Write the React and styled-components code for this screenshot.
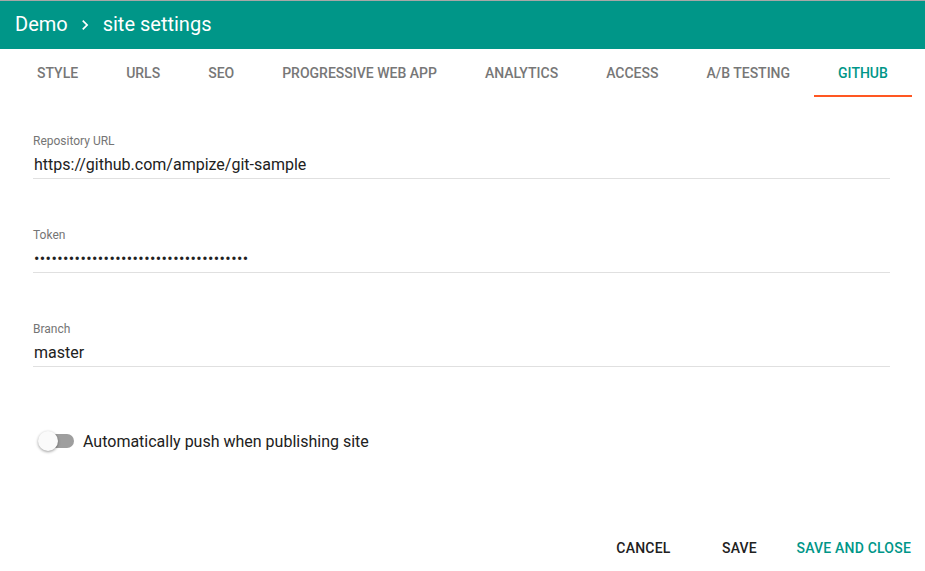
import React, { useState } from "react";
import styled, { createGlobalStyle } from "styled-components";

const GlobalStyle = createGlobalStyle`
  body {
    margin: 0;
    background: #ffffff;
    font-family: Roboto, "Noto Sans", Arial, sans-serif;
  }
`;

const Page = styled.div`
  width: 925px;
  height: 571px;
  display: flex;
  flex-direction: column;
  background: #fff;
  overflow: hidden;
`;

const AppBar = styled.header`
  box-sizing: border-box;
  height: 49px;
  border-top: 1px solid #a7a7a7;
  background: #009688;
  display: flex;
  align-items: center;
  padding: 0 0 2px 15px;
  color: #fff;
  font-size: 20px;
`;

const Crumb = styled.span`
  line-height: 24px;
`;

const Chevron = styled.svg`
  width: 20px;
  height: 20px;
  margin: 2px 8px 0 7px;
`;

const TabBar = styled.nav`
  display: flex;
  padding-left: 13px;
  height: 48px;
`;

const Tab = styled.div`
  position: relative;
  padding: 0 24px;
  display: flex;
  align-items: center;
  font-size: 14px;
  font-weight: 500;
  color: ${({ $active }) => ($active ? "#009688" : "#777777")};
  text-transform: uppercase;
  cursor: pointer;

  &::after {
    content: "";
    display: ${({ $active }) => ($active ? "block" : "none")};
    position: absolute;
    left: 0;
    right: 0;
    bottom: 0;
    height: 2px;
    background: #ff5722;
  }
`;

const Form = styled.section`
  padding: 37px 35px 0 33px;
  display: flex;
  flex-direction: column;
  gap: 49px;
`;

const Field = styled.div`
  display: flex;
  flex-direction: column;
`;

const Label = styled.label`
  font-size: 12px;
  line-height: 14px;
  color: #757575;
  margin-bottom: 4px;
`;

const Value = styled.div`
  font-size: 16px;
  line-height: 24px;
  height: 24px;
  color: #212121;
  padding: 1px 0 1px 1px;
  border-bottom: 1px solid #e0e0e0;
  letter-spacing: ${({ $masked }) => ($masked ? "0.4px" : "normal")};
`;

const ToggleRow = styled.div`
  display: flex;
  align-items: center;
  gap: 9px;
  margin: 13px 0 0 5px;
  height: 24px;
  font-size: 16px;
  color: #212121;
`;

const Switch = styled.div`
  position: relative;
  width: 36px;
  height: 20px;
  display: flex;
  align-items: center;
`;

const Track = styled.div`
  margin-left: 2px;
  width: 34px;
  height: 14px;
  border-radius: 7px;
  background: #9e9e9e;
`;

const Thumb = styled.div`
  position: absolute;
  left: 0;
  top: 0;
  width: 20px;
  height: 20px;
  border-radius: 50%;
  background: #fafafa;
  box-shadow: 0 1px 3px rgba(0, 0, 0, 0.4);
`;

const Actions = styled.footer`
  margin-top: auto;
  display: flex;
  justify-content: flex-end;
  gap: 8px;
  padding: 0 6px 5px 0;
`;

const Button = styled.button`
  min-width: 88px;
  height: 36px;
  padding: 0 8px;
  margin-left: ${({ $primary }) => ($primary ? "-3px" : "0")};
  border: none;
  background: transparent;
  font-family: inherit;
  font-size: 14px;
  font-weight: 500;
  letter-spacing: 0.2px;
  text-transform: uppercase;
  color: ${({ $primary }) => ($primary ? "#009688" : "#212121")};
  cursor: pointer;
`;

const tabs = [
  "Style",
  "URLs",
  "SEO",
  "Progressive web app",
  "Analytics",
  "Access",
  "A/B testing",
  "GitHub",
];

export default function App() {
  const [active] = useState("GitHub");

  return (
    <Page>
      <GlobalStyle />
      <AppBar>
        <Crumb>Demo</Crumb>
        <Chevron viewBox="0 0 24 24">
          <path
            d="M8.59 16.59L13.17 12 8.59 7.41 10 6l6 6-6 6z"
            fill="#fff"
          />
        </Chevron>
        <Crumb>site settings</Crumb>
      </AppBar>
      <TabBar>
        {tabs.map((t) => (
          <Tab key={t} $active={t === active}>
            {t}
          </Tab>
        ))}
      </TabBar>
      <Form>
        <Field>
          <Label>Repository URL</Label>
          <Value>https://github.com/ampize/git-sample</Value>
        </Field>
        <Field>
          <Label>Token</Label>
          <Value $masked>{"•".repeat(37)}</Value>
        </Field>
        <Field>
          <Label>Branch</Label>
          <Value>master</Value>
        </Field>
        <ToggleRow>
          <Switch>
            <Track />
            <Thumb />
          </Switch>
          Automatically push when publishing site
        </ToggleRow>
      </Form>
      <Actions>
        <Button>Cancel</Button>
        <Button>Save</Button>
        <Button $primary>Save and close</Button>
      </Actions>
    </Page>
  );
}
